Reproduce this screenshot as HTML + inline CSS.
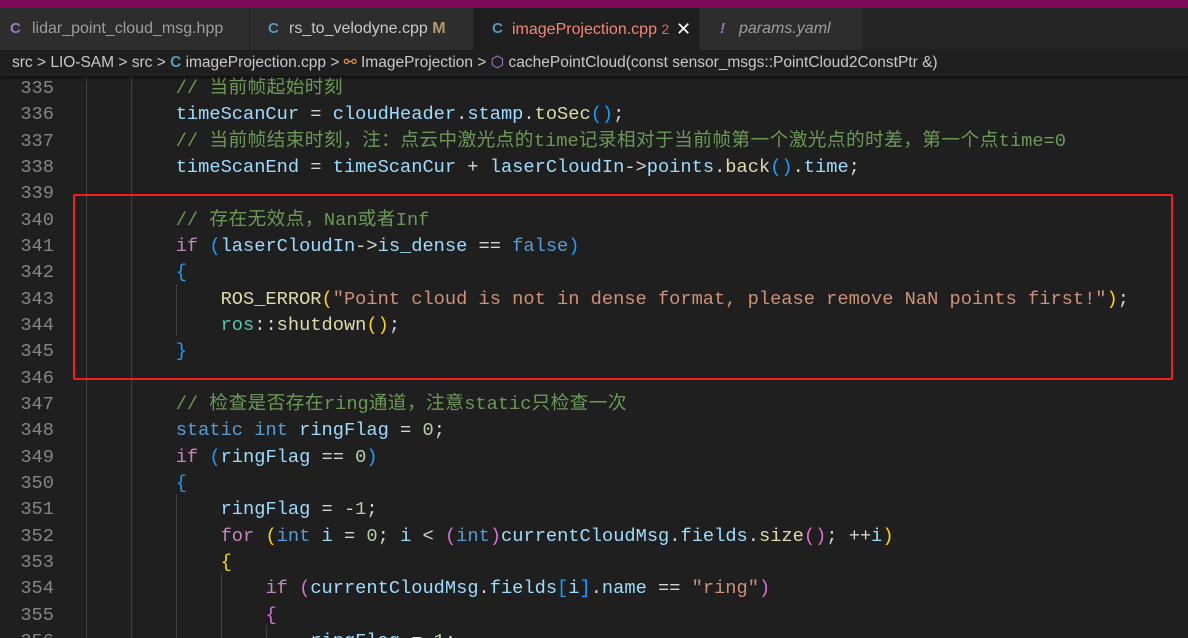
<!DOCTYPE html>
<html style="width:1188px;height:638px;overflow:hidden"><head><meta charset="utf-8"><style>
body{margin:0;width:1188px;height:638px;overflow:hidden;background:#1f1f1f;font-family:"Liberation Sans","Noto Sans CJK SC",sans-serif;position:relative}
.top{position:absolute;left:0;top:0;width:1188px;height:8px;background:#7f0a5c}
.tabs{position:absolute;left:0;top:8px;width:1188px;height:42px;background:#252526}
.tab{position:absolute;top:0;height:42px;background:#2d2d2d;color:#9d9d9d;font-size:16px;line-height:42px;white-space:nowrap}
.tab .ic{position:absolute;top:0;font-weight:bold;font-size:15px}
.bc{position:absolute;left:0;top:50px;width:1188px;height:26px;background:#1f1f1f;color:#c8c8c8;font-size:15.5px;line-height:26px;white-space:nowrap;box-shadow:0 2px 3px #0008;z-index:2}
.code{position:absolute;left:0;top:75px;width:1188px;height:563px;overflow:hidden;font-family:"Liberation Mono","Noto Sans CJK SC",monospace;font-size:18.7px;color:#d4d4d4}
.l{position:relative;height:26.33px;line-height:26.33px;white-space:pre}
.n{position:absolute;left:0;width:54px;text-align:right;color:#858585}
.t{position:absolute;left:86px}
.z{letter-spacing:0.4px}
.c{color:#6a9955}.k{color:#c586c0}.b{color:#569cd6}.v{color:#9cdcfe}.f{color:#dcdcaa}.s{color:#ce9178}.num{color:#b5cea8}.ns{color:#4ec9b0}
.y{color:#ffd700}.p{color:#da70d6}.u{color:#179fff}
.g{position:absolute;width:1px;background:#404040}
.box{position:absolute;left:73px;top:194px;width:1096px;height:182px;border:2px solid #f0201a;border-radius:2px}
</style></head><body>
<div class="top"></div>
<div class="tabs">
<div class="tab" style="left:0;width:249px"><span class="ic" style="left:10px;color:#a074c4">C</span><span style="position:absolute;left:32px">lidar_point_cloud_msg.hpp</span></div>
<div class="tab" style="left:250px;width:223px"><span class="ic" style="left:18px;color:#519aba">C</span><span style="position:absolute;left:39px;color:#c8c8c8">rs_to_velodyne.cpp <b style="color:#b59a6a;font-weight:bold">M</b></span></div>
<div class="tab" style="left:474px;width:225px;background:#1f1f1f"><span class="ic" style="left:18px;color:#519aba">C</span><span style="position:absolute;left:38px;color:#f48771">imageProjection.cpp <span style="color:#d16a5c;font-size:14px">2</span></span><span style="position:absolute;left:202px;color:#fff;font-size:18px">✕</span></div>
<div class="tab" style="left:700px;width:162px"><span class="ic" style="left:20px;color:#a074c4;font-style:italic">!</span><span style="position:absolute;left:39px;font-style:italic;color:#9d9d9d">params.yaml</span></div>
</div>
<div class="bc"><span style="position:absolute;left:12px">src &gt; LIO-SAM &gt; src &gt; <span style="color:#519aba;font-weight:bold">C</span> imageProjection.cpp &gt; <span style="color:#ee9d28">⚯</span> ImageProjection &gt; <span style="color:#b180d7">⬡</span> cachePointCloud(const sensor_msgs::PointCloud2ConstPtr &amp;)</span></div>
<div class="g" style="left:86px;top:76px;height:562px"></div>
<div class="g" style="left:131px;top:76px;height:562px"></div>
<div class="g" style="left:176px;top:284px;height:52px"></div>
<div class="g" style="left:176px;top:494px;height:144px"></div>
<div class="g" style="left:221px;top:573px;height:65px"></div>
<div class="g" style="left:266px;top:625px;height:13px"></div>
<div class="code">
<div class="l"><span class="n">335</span><span class="t">        <span class="c">// <span class="z">当前帧起始时刻</span></span></span></div>
<div class="l"><span class="n">336</span><span class="t">        <span class="v">timeScanCur</span> = <span class="v">cloudHeader</span>.<span class="v">stamp</span>.<span class="f">toSec</span><span class="u">()</span>;</span></div>
<div class="l"><span class="n">337</span><span class="t">        <span class="c">// <span class="z">当前帧结束时刻，注：点云中激光点的</span>time<span class="z">记录相对于当前帧第一个激光点的时差，第一个点</span>time=0</span></span></div>
<div class="l"><span class="n">338</span><span class="t">        <span class="v">timeScanEnd</span> = <span class="v">timeScanCur</span> + <span class="v">laserCloudIn</span>-&gt;<span class="v">points</span>.<span class="f">back</span><span class="u">()</span>.<span class="v">time</span>;</span></div>
<div class="l"><span class="n">339</span></div>
<div class="l"><span class="n">340</span><span class="t">        <span class="c">// <span class="z">存在无效点，</span>Nan<span class="z">或者</span>Inf</span></span></div>
<div class="l"><span class="n">341</span><span class="t">        <span class="k">if</span> <span class="u">(</span><span class="v">laserCloudIn</span>-&gt;<span class="v">is_dense</span> == <span class="b">false</span><span class="u">)</span></span></div>
<div class="l"><span class="n">342</span><span class="t">        <span class="u">{</span></span></div>
<div class="l"><span class="n">343</span><span class="t">            <span class="f">ROS_ERROR</span><span class="y">(</span><span class="s">"Point cloud is not in dense format, please remove NaN points first!"</span><span class="y">)</span>;</span></div>
<div class="l"><span class="n">344</span><span class="t">            <span class="ns">ros</span>::<span class="f">shutdown</span><span class="y">()</span>;</span></div>
<div class="l"><span class="n">345</span><span class="t">        <span class="u">}</span></span></div>
<div class="l"><span class="n">346</span></div>
<div class="l"><span class="n">347</span><span class="t">        <span class="c">// <span class="z">检查是否存在</span>ring<span class="z">通道，注意</span>static<span class="z">只检查一次</span></span></span></div>
<div class="l"><span class="n">348</span><span class="t">        <span class="b">static</span> <span class="b">int</span> <span class="v">ringFlag</span> = <span class="num">0</span>;</span></div>
<div class="l"><span class="n">349</span><span class="t">        <span class="k">if</span> <span class="u">(</span><span class="v">ringFlag</span> == <span class="num">0</span><span class="u">)</span></span></div>
<div class="l"><span class="n">350</span><span class="t">        <span class="u">{</span></span></div>
<div class="l"><span class="n">351</span><span class="t">            <span class="v">ringFlag</span> = -<span class="num">1</span>;</span></div>
<div class="l"><span class="n">352</span><span class="t">            <span class="k">for</span> <span class="y">(</span><span class="b">int</span> <span class="v">i</span> = <span class="num">0</span>; <span class="v">i</span> &lt; <span class="p">(</span><span class="b">int</span><span class="p">)</span><span class="v">currentCloudMsg</span>.<span class="v">fields</span>.<span class="f">size</span><span class="p">()</span>; ++<span class="v">i</span><span class="y">)</span></span></div>
<div class="l"><span class="n">353</span><span class="t">            <span class="y">{</span></span></div>
<div class="l"><span class="n">354</span><span class="t">                <span class="k">if</span> <span class="p">(</span><span class="v">currentCloudMsg</span>.<span class="v">fields</span><span class="u">[</span><span class="v">i</span><span class="u">]</span>.<span class="v">name</span> == <span class="s">"ring"</span><span class="p">)</span></span></div>
<div class="l"><span class="n">355</span><span class="t">                <span class="p">{</span></span></div>
<div class="l"><span class="n">356</span><span class="t">                    <span class="v">ringFlag</span> = <span class="num">1</span>;</span></div>
</div>
<div class="box"></div>
</body></html>
